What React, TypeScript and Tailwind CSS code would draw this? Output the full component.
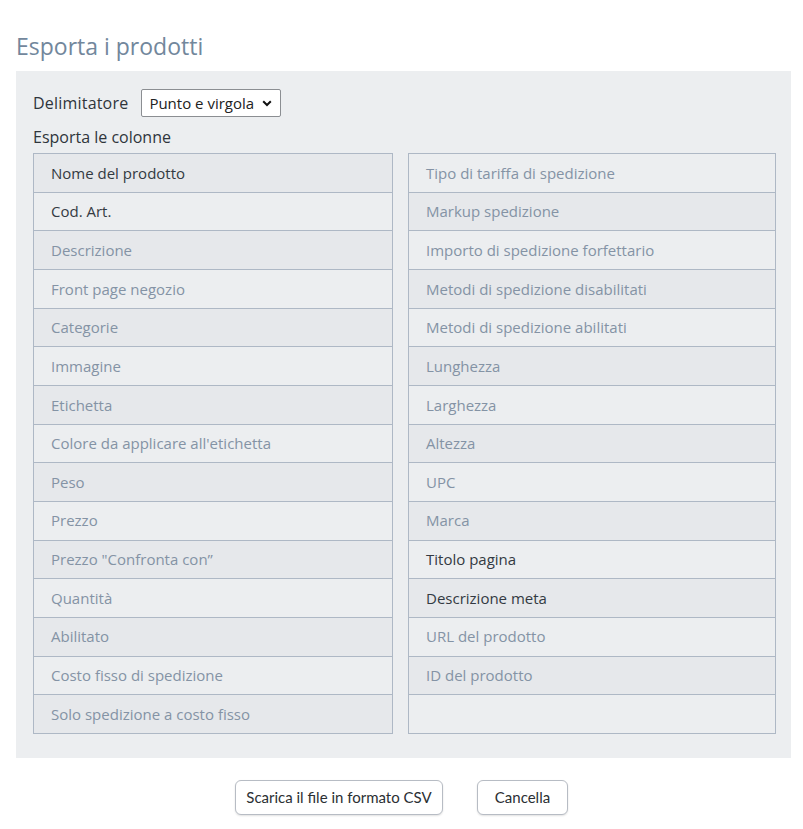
import React from "react";

const left: [string, boolean][] = [
  ["Nome del prodotto", true],
  ["Cod. Art.", true],
  ["Descrizione", false],
  ["Front page negozio", false],
  ["Categorie", false],
  ["Immagine", false],
  ["Etichetta", false],
  ["Colore da applicare all'etichetta", false],
  ["Peso", false],
  ["Prezzo", false],
  ["Prezzo \"Confronta con\u201D", false],
  ["Quantità", false],
  ["Abilitato", false],
  ["Costo fisso di spedizione", false],
  ["Solo spedizione a costo fisso", false],
];

const right: [string, boolean][] = [
  ["Tipo di tariffa di spedizione", false],
  ["Markup spedizione", false],
  ["Importo di spedizione forfettario", false],
  ["Metodi di spedizione disabilitati", false],
  ["Metodi di spedizione abilitati", false],
  ["Lunghezza", false],
  ["Larghezza", false],
  ["Altezza", false],
  ["UPC", false],
  ["Marca", false],
  ["Titolo pagina", true],
  ["Descrizione meta", true],
  ["URL del prodotto", false],
  ["ID del prodotto", false],
  ["", false],
];

function Column({ items, darkOdd }: { items: [string, boolean][]; darkOdd: boolean }) {
  return (
    <div className="flex flex-col border-x border-t border-[#aeb8c5]">
      {items.map(([label, active], i) => {
        const dark = darkOdd ? i % 2 === 0 : i % 2 === 1;
        return (
          <div
            key={i}
            className={
              "h-[38.67px] flex items-center pl-[17px] border-b border-[#aeb8c5] text-[15px] " +
              (dark ? "bg-[#e6e8eb] " : "bg-[#eceef0] ") +
              (active ? "text-[#333a42]" : "text-[#8493a5]")
            }
          >
            {label}
          </div>
        );
      })}
    </div>
  );
}

export default function App() {
  return (
    <div
      className="w-[803px] h-[829px] bg-white"
      style={{ fontFamily: '"Open Sans", "Noto Sans", sans-serif' }}
    >
      <div className="pt-[30px] pl-[16px] pr-[12px]">
        <h1 className="text-[23px] leading-[32px] text-[#72879c] mb-[9px]">Esporta i prodotti</h1>
        <div className="bg-[#eceef0] pl-[17px] pr-[15px] pt-[18px] pb-[24px]">
          <div className="flex items-center gap-[13px] h-[28px]">
            <span className="text-[16px] text-[#2f353b] tracking-[0.2px]">Delimitatore</span>
            <div className="h-[28px] w-[140px] bg-white border border-[#8b8e92] rounded-[2px] flex items-center justify-between pl-[7px] pr-[8px]">
              <span className="text-[15px] text-[#222]">Punto e virgola</span>
              <svg width="10" height="7" viewBox="0 0 10 7" className="ml-1">
                <path d="M1.2 1.2 L5 5 L8.8 1.2" stroke="#111" strokeWidth="2" fill="none" />
              </svg>
            </div>
          </div>
          <div className="text-[16px] text-[#2f353b] mt-[8px] leading-[24px] mb-[4px]">Esporta le colonne</div>
          <div className="grid grid-cols-[360px_368px] gap-x-[15px]">
            <Column items={left} darkOdd={true} />
            <Column items={right} darkOdd={false} />
          </div>
        </div>
      </div>
      <div className="flex justify-center gap-[34px] mt-[22px]" style={{ fontFamily: 'Lato, "Open Sans", sans-serif' }}>
        <button className="h-[35px] w-[208px] border border-[#b7bcc4] rounded-[6px] bg-white text-[15px] text-[#2b2f33] shadow-[0_1px_2px_rgba(0,0,0,0.12)]">
          Scarica il file in formato CSV
        </button>
        <button className="h-[35px] w-[91px] border border-[#b7bcc4] rounded-[6px] bg-white text-[15px] text-[#2b2f33] shadow-[0_1px_2px_rgba(0,0,0,0.12)]">
          Cancella
        </button>
      </div>
    </div>
  );
}
